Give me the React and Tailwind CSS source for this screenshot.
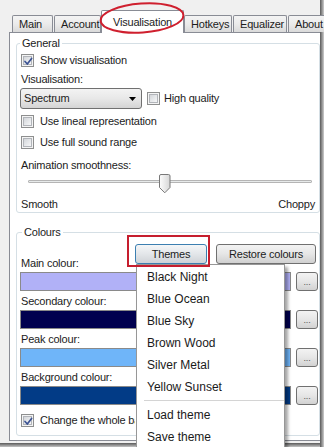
import React from "react";

const font = { fontFamily: '"Liberation Sans", Arial, sans-serif' };

function Checkbox({ checked }) {
  return (
    <div className="w-[13px] h-[13px] shrink-0 border border-[#8e8f8f] bg-[#f4f4f4] p-[1px]">
      <div className="relative w-full h-full border border-[#b2b5ba] bg-gradient-to-br from-[#d3d6da] to-[#f6f7f8]">
        {checked && (
          <svg className="absolute left-[-1px] top-[-1px]" width="11" height="11" viewBox="0 0 11 11">
            <path d="M2 5.5 L4.3 8 L8.6 2.4" fill="none" stroke="#3c5393" strokeWidth="1.7" strokeLinecap="round" strokeLinejoin="round" />
          </svg>
        )}
      </div>
    </div>
  );
}

function CheckRow({ checked, label, className = "", labelClass = "" }) {
  return (
    <div className={"flex items-center h-[14px] pl-[1px] " + className}>
      <Checkbox checked={checked} />
      <span className={"ml-[6px] whitespace-nowrap " + labelClass}>{label}</span>
    </div>
  );
}

function Tab({ label, w, className = "" }) {
  return (
    <div
      className={
        "h-[17px] shrink-0 border border-b-0 border-[#898c95] rounded-t-[2px] bg-gradient-to-b from-[#f4f4f4] via-[#ebebeb] to-[#dadada] pl-[6px] flex items-center leading-[14px] overflow-hidden whitespace-nowrap " +
        w +
        " " +
        className
      }
    >
      {label}
    </div>
  );
}

function DotsButton() {
  return (
    <div className="ml-[5px] w-[22px] border border-[#707070] rounded-[3px] bg-gradient-to-b from-[#f3f3f3] via-[#e6e6e6] to-[#d2d2d2] flex items-end justify-center pb-[3px] text-[9px] leading-[9px] text-[#555]">
      ...
    </div>
  );
}

function ColourRow({ label, color, labelClass = "mt-[3px]" }) {
  return (
    <>
      <div className={"h-[14px] leading-[14px] pl-[1px] " + labelClass}>{label}</div>
      <div className="mt-[2px] flex items-stretch h-[19px]">
        <div className={"flex-1 border border-[#8a8a8a] " + color} />
        <DotsButton />
      </div>
    </>
  );
}

export default function App() {
  return (
    <div className="w-[324px] h-[447px] bg-[#f0f0f0] relative overflow-hidden flex text-[11px] tracking-[-0.2px] text-[#1c1c1c]" style={font}>
      <div className="w-[320px] flex flex-col">
        <div className="h-[443px] flex flex-col pl-[9px] pt-[10px] pb-[2px]">
          {/* Tabs */}
          <div className="h-[22px] flex items-end pl-[3px] relative z-10">
            <Tab label="Main" w="w-[41px]" />
            <Tab label="Account" w="w-[47px]" className="ml-[1px]" />
            <div className="h-[23px] w-[83px] -mb-px shrink-0 bg-white border border-b-0 border-[#898c95] rounded-t-[2px] flex items-start justify-center pt-[4px] leading-[14px] whitespace-nowrap">
              Visualisation
            </div>
            <Tab label="Hotkeys" w="w-[48px]" />
            <Tab label="Equalizer" w="w-[54px]" className="ml-[1px]" />
            <Tab label="About" w="w-[45px]" className="ml-[1px]" />
          </div>
          {/* Panel */}
          <div className="flex-1 bg-white border border-r-0 border-[#898c95] pl-[6px] pt-[3px] flex flex-col">
            {/* General */}
            <fieldset className="border border-[#d5dfe5] rounded-[3px] pl-[3px] pr-[1px] pb-[1px]">
              <legend className="px-[2px] leading-[14px]">General</legend>
              <CheckRow checked label="Show visualisation" className="mt-[3px]" />
              <div className="mt-[5px] h-[14px] leading-[14px] pl-[1px]">Visualisation:</div>
              <div className="mt-[2px] h-[21px] flex items-center">
                <div className="w-[122px] h-[21px] border border-[#707070] rounded-[3px] bg-gradient-to-b from-[#f3f3f3] via-[#e8e8e8] to-[#d4d4d4] flex items-center pl-[3px] pr-[5px] justify-between">
                  <span>Spectrum</span>
                  <svg width="7" height="4" viewBox="0 0 7 4">
                    <path d="M0 0 H7 L3.5 4 Z" fill="#000" />
                  </svg>
                </div>
                <div className="ml-[5px] flex items-center">
                  <Checkbox />
                  <span className="ml-[4px] whitespace-nowrap">High quality</span>
                </div>
              </div>
              <CheckRow label="Use lineal representation" className="mt-[5px]" />
              <CheckRow label="Use full sound range" className="mt-[7px]" />
              <div className="mt-[9px] h-[14px] leading-[14px] pl-[1px]">Animation smoothness:</div>
              <div className="relative h-[21px]">
                <div className="absolute left-[8px] right-[6px] top-[8px] h-[3px] border border-[#b5b5b5] bg-[#e7eaea] rounded-[1px]" />
                <svg className="absolute left-[139px] top-[2px]" width="12" height="20" viewBox="0 0 12 20">
                  <defs>
                    <linearGradient id="thumb" x1="0" y1="0" x2="1" y2="0">
                      <stop offset="0" stopColor="#fdfdfd" />
                      <stop offset="1" stopColor="#d6d6d6" />
                    </linearGradient>
                  </defs>
                  <path d="M0.5 2 Q0.5 0.5 2 0.5 H9.5 Q11 0.5 11 2 V13.5 L5.75 18.8 L0.5 13.5 Z" fill="url(#thumb)" stroke="#787878" />
                </svg>
              </div>
              <div className="mt-[4px] h-[14px] leading-[14px] flex justify-between pl-[1px] pr-[3px]">
                <span>Smooth</span>
                <span>Choppy</span>
              </div>
            </fieldset>

            {/* Colours */}
            <fieldset className="mt-[12px] border border-[#d5dfe5] rounded-[3px] pl-[3px] pr-[1px] pb-[8px]">
              <legend className="ml-[2px] px-[2px] leading-[14px]">Colours</legend>
              <div className="mt-[5px] flex justify-between items-start">
                <div className="mt-[12px] h-[14px] leading-[14px] pl-[1px]">Main colour:</div>
                <div className="flex mr-[2px]">
                  <div className="w-[72px] h-[20px] border border-[#3c7fb1] rounded-[3px] bg-gradient-to-b from-[#f4f6f8] via-[#e3e6e9] to-[#cfd3d7] flex items-center justify-center">
                    Themes
                  </div>
                  <div className="ml-[9px] w-[100px] h-[20px] border border-[#707070] rounded-[3px] bg-gradient-to-b from-[#f3f3f3] via-[#e6e6e6] to-[#d0d0d0] flex items-center justify-center">
                    Restore colours
                  </div>
                </div>
              </div>
              <div className="mt-[2px] flex items-stretch h-[19px]">
                <div className="flex-1 border border-[#8a8a8a] bg-[#b1b1f7]" />
                <DotsButton />
              </div>
              <ColourRow label="Secondary colour:" color="bg-[#00004f]" />
              <ColourRow label="Peak colour:" color="bg-[#6fb5f9]" />
              <ColourRow label="Background colour:" color="bg-[#023b86]" />
              <CheckRow checked label="Change the whole background" className="mt-[8px]" labelClass="max-w-[95px] overflow-hidden" />
            </fieldset>
          </div>
        </div>
        <div className="h-[4px] bg-gradient-to-b from-[#5a5a5a] to-[#c4c4c4]" />
      </div>
      <div className="w-[4px] bg-gradient-to-r from-[#5a5a5a] to-[#cfcfcf]" />

      {/* Themes dropdown menu */}
      <div className="absolute z-20 left-[136px] top-[264px] w-[149px] h-[190px] bg-white border border-[#979797] shadow-[3px_3px_3px_rgba(0,0,0,0.35)] pt-[1px] text-[12px] tracking-normal text-[#1a1a1a]">
        {["Black Night", "Blue Ocean", "Blue Sky", "Brown Wood", "Silver Metal", "Yellow Sunset"].map((t) => (
          <div key={t} className="h-[22px] flex items-center pl-[10px] whitespace-nowrap">
            {t}
          </div>
        ))}
        <div className="h-[6px] flex flex-col justify-center pl-[7px]">
          <div className="h-px bg-[#d4d4d4]" />
          <div className="h-px bg-white" />
        </div>
        <div className="h-[22px] flex items-center pl-[10px]">Load theme</div>
        <div className="h-[22px] flex items-center pl-[10px]">Save theme</div>
      </div>

      {/* Red annotations */}
      <svg className="absolute z-30 left-0 top-0 pointer-events-none" width="324" height="60" viewBox="0 0 324 60">
        <ellipse cx="142" cy="18" rx="41.5" ry="14.5" fill="none" stroke="#cf1f2e" strokeWidth="2" transform="rotate(-4 142 18)" />
      </svg>
      <div className="absolute z-30 left-[127px] top-[235px] w-[83px] h-[32px] border-2 border-[#c61e2e] pointer-events-none" />
    </div>
  );
}
